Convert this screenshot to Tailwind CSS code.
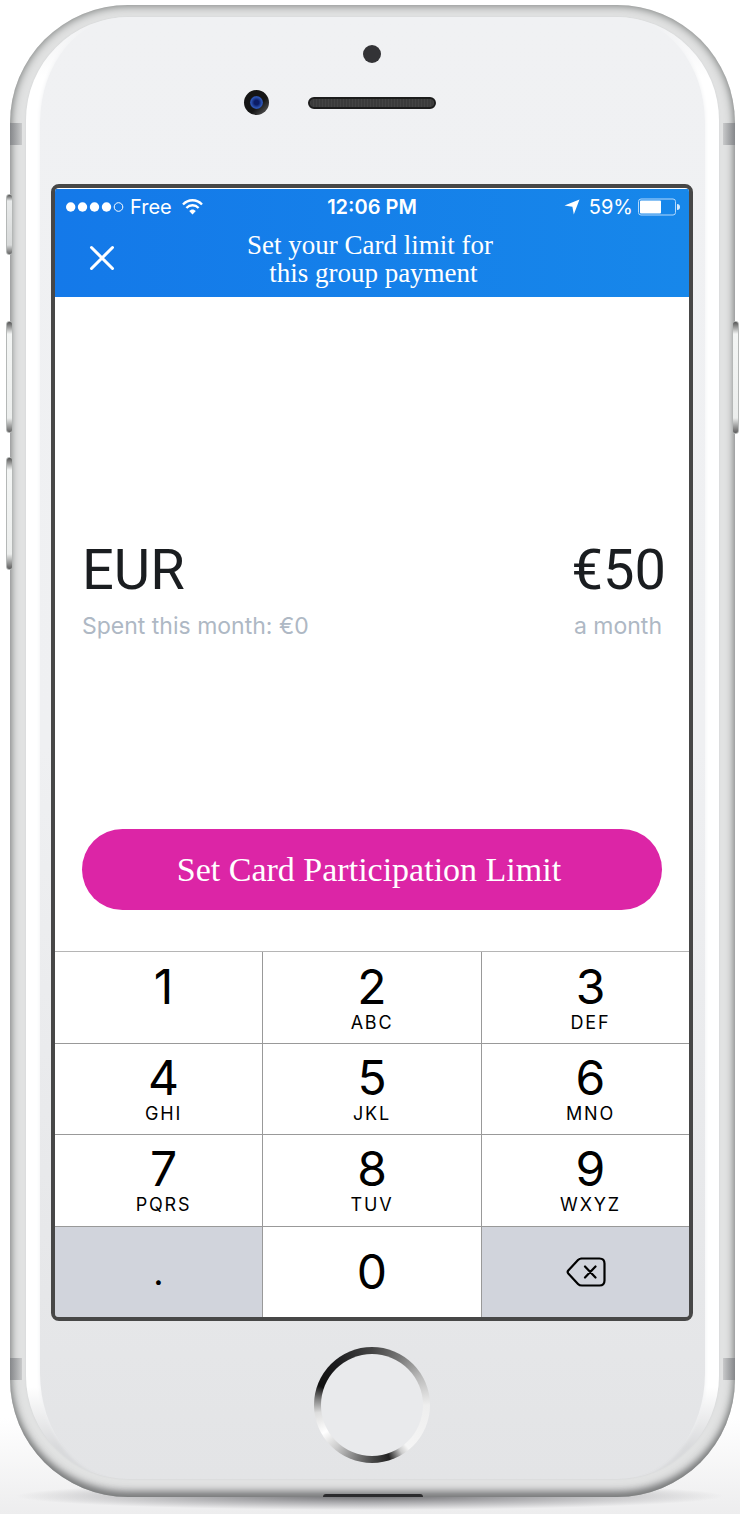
<!DOCTYPE html>
<html lang="en">
<head>
<meta charset="utf-8">
<meta name="viewport" content="width=device-width, initial-scale=1">
<title>Set your Card limit</title>
<script src="https://cdn.jsdelivr.net/npm/@tailwindcss/browser@4"></script>
</head>
<body class="bg-white font-['Inter',sans-serif]">
<main class="relative isolate pt-[5px] pr-[5px] pb-[17px] pl-[10px]">
  <!-- floor and drop shadow -->
  <div class="absolute inset-x-0 bottom-0 -z-20 h-24 bg-linear-to-b from-white to-[#ededee]"></div>
  <div class="absolute inset-x-4 bottom-1 -z-10 h-7 bg-[radial-gradient(closest-side,#6c6c6f,#a9a9ac_45%,transparent)]"></div>

  <!-- side buttons -->
  <div class="absolute top-[194px] left-[6px] z-10 h-[61px] w-[7px] rounded-[3px] border border-[#b5b8b7] bg-[linear-gradient(#555_0,#e8eaea_6px,#d8dada_50px,#666_59px)]"></div>
  <div class="absolute top-[321px] left-[6px] z-10 h-[112px] w-[7px] rounded-[3px] border border-[#b5b8b7] bg-[linear-gradient(#555_0,#f3f5f4_12px,#eceeed_96px,#666_110px)]"></div>
  <div class="absolute top-[457px] left-[6px] z-10 h-[113px] w-[7px] rounded-[3px] border border-[#b5b8b7] bg-[linear-gradient(#555_0,#f3f5f4_12px,#eceeed_96px,#666_110px)]"></div>
  <div class="absolute top-[321px] right-[1px] z-10 h-[113px] w-[7px] rounded-[3px] border border-[#b5b8b7] bg-[linear-gradient(#555_0,#f3f5f4_12px,#eceeed_96px,#666_110px)]"></div>

  <div class="relative overflow-hidden rounded-[118px] bg-[#e1e2e2] px-4 pt-3 pb-[18px] shadow-[inset_0_0_9px_1px_#7b7e7d,inset_0_-9px_9px_-4px_#77777a]">
    <!-- antenna bands -->
    <div class="absolute top-[118px] left-0 h-[22px] w-3 bg-linear-to-r from-[#85878a] to-[#c9cacb]"></div>
    <div class="absolute top-[118px] right-0 h-[22px] w-3 bg-linear-to-l from-[#85878a] to-[#c9cacb]"></div>
    <div class="absolute bottom-[117px] left-0 h-[22px] w-3 bg-linear-to-r from-[#85878a] to-[#c9cacb]"></div>
    <div class="absolute right-0 bottom-[117px] h-[22px] w-3 bg-linear-to-l from-[#85878a] to-[#c9cacb]"></div>
    <div class="absolute bottom-0 left-1/2 h-[3px] w-[100px] -translate-x-1/2 rounded-t-sm bg-[#2b2b2d]"></div>

    <div class="relative overflow-hidden rounded-[103px] bg-[linear-gradient(#eff0f2_0,#fff_60px,#fff_1370px,#d9dadc_1430px)] px-[14px] shadow-[0_0_2px_#cfd1d3]">
      <div class="rounded-[86px/105px] bg-linear-to-b from-[#f0f1f3] via-[#eff0f2] to-[#e3e4e6] pr-[12px] pb-4 pl-[11px] shadow-[0_0_4px_#f0f1f3]">
        <!-- sensor, camera, speaker -->
        <div class="flex flex-col items-center pt-7">
          <div class="size-[18px] rounded-full bg-[#333336]"></div>
          <div class="mt-[27px] flex w-full items-center justify-center gap-[39px] pr-[64px]">
            <div class="flex size-[25px] items-center justify-center rounded-full bg-[linear-gradient(135deg,#151515_60%,#666)]">
              <div class="size-[13px] rounded-full bg-[radial-gradient(#0b1c66_25%,#2c55b5_60%,#26336b)]"></div>
            </div>
            <div class="h-3 w-[128px] rounded-full border-2 border-[#1c1c1c] bg-[repeating-linear-gradient(90deg,#444_0_1px,#3b3b3b_1px_3px)]"></div>
          </div>
        </div>

        <!-- screen -->
        <div class="mt-[69px] overflow-hidden rounded-lg border-4 border-[#474747] bg-white">
          <header class="mt-px bg-linear-to-r from-[#1479e9] to-[#1787ea] text-white">
            <div class="grid h-[36px] grid-cols-3 items-center px-[11px] text-xl">
              <div class="flex items-center gap-[6px]">
                <svg class="h-[12px] w-[58px]" viewBox="0 0 58 12" fill="#fff" aria-hidden="true"><circle cx="4.700" cy="6" r="4.700"/><circle cx="16.500" cy="6" r="4.700"/><circle cx="28.500" cy="6" r="4.700"/><circle cx="40.500" cy="6" r="4.700"/><circle cx="52.500" cy="6" r="4.300" fill="none" stroke="#fff"/></svg>
                <span>Free</span>
                <svg class="ml-1 h-[16px] w-[21px]" viewBox="0 0 21 16" fill="none" stroke="#fff" stroke-width="2.300" aria-hidden="true"><path d="M1 5.500C6.200-.2 14.800-.2 20 5.500"/><path d="M4.400 9C7.800 5.300 13.200 5.300 16.600 9"/><path d="M7.200 12C9 9.900 12 9.900 13.800 12L10.500 15.500Z" fill="#fff" stroke="none"/></svg>
              </div>
              <div class="text-center font-semibold">12:06 PM</div>
              <div class="flex items-center justify-end gap-[5px]">
                <svg class="mr-1 h-[16px] w-[16px]" viewBox="0 0 16 16" fill="#fff" aria-hidden="true"><path d="M15.500.5L9.800 15.500L8.400 7.800L.5 6.600Z"/></svg>
                <span>59%</span>
                <svg class="-mr-[2px] h-[18px] w-[42px]" viewBox="0 0 42 18" aria-hidden="true"><rect x=".5" y="1" width="37" height="16" rx="2.500" fill="none" stroke="#b4d8fb"/><rect x="2" y="2.500" width="21" height="13" rx="1" fill="#fff"/><path d="M39 6q3 0 3 3t-3 3z" fill="#d5eafd"/></svg>
              </div>
            </div>
            <div class="grid h-[72px] grid-cols-[94px_1fr_94px]">
              <button type="button" aria-label="Close" class="mt-[20px] ml-[34px] flex size-[26px] items-center justify-center">
                <svg class="size-[26px]" viewBox="0 0 26 26" fill="none" stroke="#fff" stroke-width="3" stroke-linecap="round"><path d="M2.500 2.500L23.500 23.500M23.500 2.500L2.500 23.500"/></svg>
              </button>
              <h1 class="mt-[6px] pr-1 text-center font-['Liberation_Serif',serif] text-[27px] leading-7">Set your Card limit for<br>&nbsp;this group payment</h1>
            </div>
          </header>

          <section class="px-[27px] pt-[245px] pb-[41px]">
            <div class="-mr-1 flex items-center justify-between font-['Roboto',sans-serif] text-[56px] leading-[56px] text-[#1a1d20]">
              <span>EUR</span><span>€50</span>
            </div>
            <div class="mt-[12px] flex items-center justify-between text-[23px] leading-8 text-[#aeb8c4]">
              <span>Spent this month: €0</span><span>a month</span>
            </div>
            <button type="button" class="mt-[187px] h-[81px] w-full rounded-full bg-[#dc25a6] pr-[6px] font-['Liberation_Serif',serif] text-[34px] text-white">Set Card Participation Limit</button>
          </section>

          <div class="grid grid-cols-[207fr_218fr_207fr] gap-px border-t border-[#b5b5b5] bg-[#999] text-black">
            <button type="button" class="flex h-[91px] flex-col items-center bg-white pt-[10px] pl-[10px]"><span class="text-[48px] leading-[50px]">1</span></button>
            <button type="button" class="flex h-[91px] flex-col items-center bg-white pt-[10px]"><span class="text-[48px] leading-[50px]">2</span><span class="mt-px text-lg leading-5 tracking-widest">ABC</span></button>
            <button type="button" class="flex h-[91px] flex-col items-center bg-white pt-[10px] pl-[10px]"><span class="text-[48px] leading-[50px]">3</span><span class="mt-px text-lg leading-5 tracking-widest">DEF</span></button>
            <button type="button" class="flex h-[90px] flex-col items-center bg-white pt-[9px] pl-[10px]"><span class="text-[48px] leading-[50px]">4</span><span class="mt-px text-lg leading-5 tracking-widest">GHI</span></button>
            <button type="button" class="flex h-[90px] flex-col items-center bg-white pt-[9px]"><span class="text-[48px] leading-[50px]">5</span><span class="mt-px text-lg leading-5 tracking-widest">JKL</span></button>
            <button type="button" class="flex h-[90px] flex-col items-center bg-white pt-[9px] pl-[10px]"><span class="text-[48px] leading-[50px]">6</span><span class="mt-px text-lg leading-5 tracking-widest">MNO</span></button>
            <button type="button" class="flex h-[91px] flex-col items-center bg-white pt-[9px] pl-[10px]"><span class="text-[48px] leading-[50px]">7</span><span class="mt-px text-lg leading-5 tracking-widest">PQRS</span></button>
            <button type="button" class="flex h-[91px] flex-col items-center bg-white pt-[9px]"><span class="text-[48px] leading-[50px]">8</span><span class="mt-px text-lg leading-5 tracking-widest">TUV</span></button>
            <button type="button" class="flex h-[91px] flex-col items-center bg-white pt-[9px] pl-[10px]"><span class="text-[48px] leading-[50px]">9</span><span class="mt-px text-lg leading-5 tracking-widest">WXYZ</span></button>
            <button type="button" class="flex h-[90px] items-center justify-center bg-[#d1d4dc] text-[36px]">.</button>
            <button type="button" class="flex h-[90px] items-center justify-center bg-white text-[48px]">0</button>
            <button type="button" aria-label="Delete" class="flex h-[90px] items-center justify-center bg-[#d1d4dc]">
              <svg class="h-[30px] w-10" viewBox="0 0 40 30" fill="none" stroke="#000" stroke-width="2.200" stroke-linecap="round" stroke-linejoin="round"><path d="M15 1.500H33.500Q38.500 1.500 38.500 6.500V23.500Q38.500 28.500 33.500 28.500H16Q13.500 28.500 12 26.900L2.300 16.500Q1 15 2.300 13.500L12 3.100Q13.500 1.500 16 1.500Z"/><path d="M19 9.500L29.500 20.500M29.500 9.500L19 20.500"/></svg>
            </button>
          </div>
        </div>

        <!-- home button -->
        <div class="mt-[26px] flex justify-center">
          <button type="button" aria-label="Home" class="size-[116px] rounded-full bg-[conic-gradient(#444_0deg,#777_30deg,#bbb_60deg,#eee_90deg,#f5f5f5_140deg,#ccc_148deg,#222_162deg,#444_178deg,#777_195deg,#ccc_220deg,#fff_240deg,#ddd_262deg,#888_275deg,#111_290deg,#1c1c1e_320deg,#444_360deg)] p-[7px]">
            <span class="block size-full rounded-full bg-[#e9eaec]"></span>
          </button>
        </div>
      </div>
    </div>
  </div>
</main>
</body>
</html>
